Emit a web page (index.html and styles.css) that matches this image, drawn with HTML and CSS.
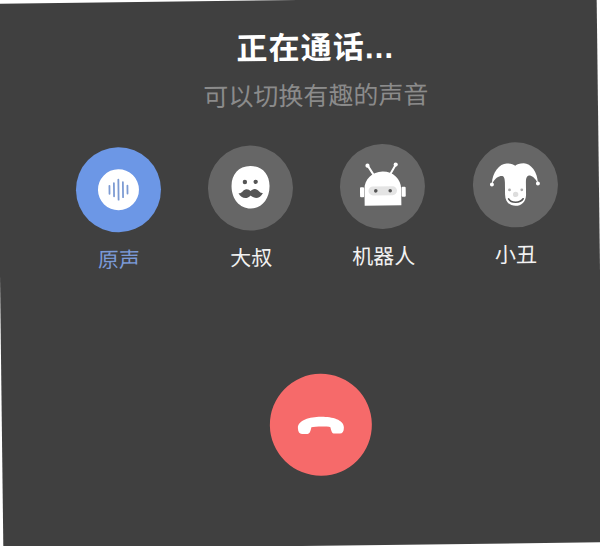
FILE: index.html
```html
<!DOCTYPE html>
<html lang="zh-CN">
<head>
    <meta charset="UTF-8">
    <meta name="viewport" content="width=device-width, initial-scale=1.0">
    <title>正在通话</title>
    <link rel="stylesheet" href="styles.css">
</head>
<body>
    <div class="call-screen">
        <h1 class="call-title">正在通话...</h1>
        <p class="call-hint">可以切换有趣的声音</p>
        <div class="voice-list">
            <div class="voice voice-active">
                <div class="voice-circle">
                    <svg viewBox="0 0 85 85" width="85" height="85">
                        <circle cx="42.5" cy="42.5" r="20.5" fill="#fff"/>
                        <path d="M33.5 38.500v8M38 36v13M42.500 32.500v20M47 35v15M51.500 38.500v8" stroke="#7d9bd3" stroke-width="1.800" stroke-linecap="round"/>
                    </svg>
                </div>
                <span class="voice-name">原声</span>
            </div>
            <div class="voice">
                <div class="voice-circle">
                    <svg viewBox="0 0 85 85" width="85" height="85">
                        <path d="M42.600 20.500c12 0 19 8.500 19 20 0 13-8 22.500-19 22.500s-19-9.500-19-22.500c0-11.500 7-20 19-20z" fill="#fff"/>
                        <circle cx="37" cy="36.300" r="2.200" fill="#555"/>
                        <circle cx="47.800" cy="36.300" r="2.200" fill="#555"/>
                        <path d="M30.500 47.500c3 1 4.500-4 8-4 2 0 3.200 1 4.200 2 1-1 2.200-2 4.200-2 3.500 0 5 5 8 4-1.500 3.500-5 5.300-8 4.800-2.200-.4-3.200-1.500-4.200-2.300-1 .8-2 1.900-4.200 2.300-3 .5-6.500-1.300-8-4.800z" fill="#555"/>
                    </svg>
                </div>
                <span class="voice-name">大叔</span>
            </div>
            <div class="voice">
                <div class="voice-circle">
                    <svg viewBox="0 0 85 85" width="85" height="85">
                        <path d="M28 21.500l6 9.500M56 21l-6 10" stroke="#fff" stroke-width="2" fill="none"/>
                        <circle cx="27.800" cy="21.500" r="2.100" fill="#fff"/>
                        <circle cx="56" cy="20.800" r="2.100" fill="#fff"/>
                        <path d="M24.500 61.500V45c0-10 8-17.500 18.300-17.500S61.200 35 61.200 45v16.500z" fill="#fff"/>
                        <rect x="20" y="43" width="4.100" height="10" rx="1" fill="#fff"/>
                        <rect x="61.600" y="43" width="4.100" height="10" rx="1" fill="#fff"/>
                        <rect x="28.500" y="42.300" width="28.500" height="9" rx="4.500" fill="#e4e4e4"/>
                        <circle cx="35.800" cy="46.800" r="1.800" fill="#555"/>
                        <circle cx="50.200" cy="46.800" r="1.800" fill="#555"/>
                    </svg>
                </div>
                <span class="voice-name">机器人</span>
            </div>
            <div class="voice">
                <div class="voice-circle">
                    <svg viewBox="0 0 85 85" width="85" height="85">
                        <path d="M19 41.500C19 30 27 21 34 21c4 0 7 1 8.500 2.500C44 22 47 21 51 21c7 0 14 9 14 20.500-3-6.500-7-8.500-9.500-8-2 .5-2.500 3.500-2.500 6.500v12c0 8-5 11.500-10.500 11.500S32 60 32 52V40c0-3-.5-6-2.500-6.500-2.500-.5-7.500 1.500-10.500 8z" fill="#fff"/>
                        <circle cx="19" cy="41.800" r="2" fill="#fff"/>
                        <circle cx="65" cy="41.500" r="2" fill="#fff"/>
                        <circle cx="36.500" cy="47.500" r="1.400" fill="#aaa"/>
                        <circle cx="48.800" cy="47.500" r="1.400" fill="#aaa"/>
                        <circle cx="42.600" cy="52" r="2.700" fill="#ddd"/>
                        <path d="M35.500 56.500c2.500 4.500 11.500 4.500 14.500 0" stroke="#555" stroke-width="1.600" fill="none" stroke-linecap="round"/>
                    </svg>
                </div>
                <span class="voice-name">小丑</span>
            </div>
        </div>
        <div class="hangup">
            <svg viewBox="0 0 102 102" width="102" height="102">
                <path d="M28 54c0-8 12-11 23-11s23 3 23 11c0 4-1.500 6-4 6h-5.500c-2.500 0-3-2.500-4-6.500-3-1-16-1-19 0-1 4-1.500 6.500-4 6.500H32c-2.500 0-4-2-4-6z" fill="#fff"/>
            </svg>
        </div>
    </div>
</body>
</html>
```

FILE: styles.css
```css
html, body {
    margin: 0;
    padding: 0;
    height: 100%;
    overflow: hidden;
    background: #fff;
}
.call-screen {
    display: flex;
    flex-direction: column;
    width: 600px;
    height: 546px;
    background: #404040;
    color: #fff;
    font-family: "Liberation Sans", "Noto Sans CJK SC", sans-serif;
    transform: rotate(-0.7deg);
}
.call-title {
    margin: 31px 0 0 36px;
    font-size: 31px;
    line-height: 36px;
    font-weight: bold;
    letter-spacing: 1.1px;
    text-align: center;
}
.call-hint {
    margin: 14px 0 0 36px;
    font-size: 25px;
    line-height: 30px;
    color: #8b8b8b;
    text-align: center;
}
.voice-list {
    display: grid;
    grid-template-columns: repeat(4, 132.3px);
    margin: 34px 0 0 53px;
}
.voice {
    display: flex;
    flex-direction: column;
    align-items: center;
    gap: 14px;
}
.voice-circle {
    width: 85px;
    height: 85px;
    border-radius: 50%;
    background: #666;
}
.voice-circle svg, .hangup svg {
    display: block;
}
.voice-active .voice-circle {
    background: #6c97e6;
}
.voice-name {
    font-size: 21px;
    line-height: 28px;
    color: #f2f2f2;
}
.voice-active .voice-name {
    color: #7b9ad8;
}
.hangup {
    width: 102px;
    height: 102px;
    margin: 102px 0 0 268px;
    border-radius: 50%;
    background: #f66a6a;
}
```
